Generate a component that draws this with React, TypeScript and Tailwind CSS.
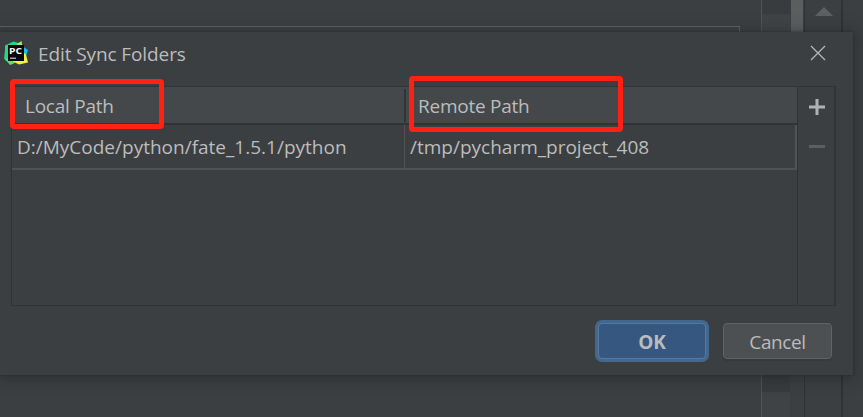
import React from 'react';

function PyCharmLogo() {
  return (
    <svg viewBox="0 0 24 24" className="h-6 w-6 shrink-0">
      <path d="M1 4.5 9.5 .5l7 2L7 23l-6-4Z" fill="#20d68b" />
      <path d="M0 18 1.5 5 6 4v16l-3-1Z" fill="#28d583" />
      <path d="m13 3 4.5-3 1 6h-5Z" fill="#a7ed55" />
      <path d="m19 5.5 5 3.5-2 6-4-2Z" fill="#16bfe4" />
      <path d="m5 18 2 5.5 4-2 4 2 9-2-2-8-4-3Z" fill="#f0ef45" />
      <path d="m1 18 5 6 4-2-2-5Z" fill="#5cdf70" />
      <rect x="4" y="4" width="16" height="16" fill="#080808" />
      <path d="M6 17.2h6" stroke="#ddd" strokeWidth="1.1" />
      <text x="5" y="12.8" fill="#fff" fontFamily="Open Sans, sans-serif" fontWeight="700" fontSize="9.6" textLength="13" lengthAdjust="spacingAndGlyphs">PC</text>
    </svg>
  );
}

function EditorBackdrop() {
  return (
    <div className="flex h-full w-full">
      <div className="w-[762px] border-r border-[#515455] pt-[26px]">
        <div className="h-[200px] w-[740px] border-t border-r border-[#606264]" />
      </div>
      <div className="flex w-[29px] flex-col">
        <div className="h-[14px] bg-[#393c3e]" />
        <div className="h-[300px] w-[28px] bg-[#404345]" />
        <div className="h-[78px] w-[28px] bg-[#383b3d]" />
        <div className="w-[28px] grow bg-[#404345]" />
      </div>
      <div className="w-[13px]">
        <div className="h-[200px] w-[12px] bg-[#5b5e5f]" />
      </div>
      <div className="flex w-[39px] justify-center border-r-2 border-l border-[#303233] pt-[7px] pl-[2px]">
        <svg viewBox="0 0 18 9" className="h-[9px] w-[18px]">
          <path d="M9 0 18 9H0Z" fill="#5e6060" />
        </svg>
      </div>
    </div>
  );
}

export default function App() {
  return (
    <div className="relative h-[417px] w-[863px] overflow-hidden bg-[#3c3f41] font-['Open_Sans','Noto_Sans',sans-serif] text-[19px] leading-6 text-[#bbbcbd]">
      <EditorBackdrop />
      <section className="absolute top-8 left-0 flex h-[343px] w-[853px] flex-col bg-[#3c3f41] shadow-[0_2px_12px_3px_rgba(35,35,35,0.5),0_0_2px_rgba(35,35,35,0.6)]">
        <header className="flex h-[54px] items-start pt-[9px] pl-1">
          <PyCharmLogo />
          <h1 className="ml-[10px] pt-px tracking-[-0.1px] whitespace-nowrap">Edit Sync Folders</h1>
          <svg viewBox="0 0 16 16" className="mt-1 mr-[27px] ml-auto h-4 w-4">
            <path d="m1 1 14 14M15 1 1 15" stroke="#b5b6b7" strokeWidth="1.3" />
          </svg>
        </header>

        <div className="ml-[11px] flex h-[220px] w-[825px] border border-r-2 border-[#323334]">
          <div className="w-[785px]">
            <div className="flex h-[38px] items-center border-b-2 border-[#323334] bg-[#45484a]">
              <div className="flex h-[33px] w-[394px] items-center border-r-2 border-[#323334] pt-px pl-[13px]">
                <span className="tracking-[-0.25px] whitespace-nowrap">Local Path</span>
              </div>
              <span className="pt-px pl-3 tracking-[-0.25px] whitespace-nowrap">Remote Path</span>
            </div>
            <div className="flex h-[45px] border-r-2 border-b-2 border-[#505254]">
              <div className="flex w-[393px] items-center border-r border-[#505254] pl-[5px]">
                <span className="whitespace-nowrap">D:/MyCode/python/fate_1.5.1/python</span>
              </div>
              <div className="flex items-center pl-[5px]">
                <span className="whitespace-nowrap">/tmp/pycharm_project_408</span>
              </div>
            </div>
          </div>
          <div className="flex grow flex-col items-center border-l border-[#323334] pt-3 pl-px">
            <svg viewBox="0 0 16 16" className="h-4 w-4">
              <path d="M8 0v16M0 8h16" stroke="#b0b1b2" strokeWidth="3" />
            </svg>
            <div className="mt-[30px] h-[3px] w-4 bg-[#5c5e5f]" />
          </div>
        </div>

        <footer className="flex items-start justify-end pt-[14px] pr-[21px]">
          <button className="flex h-[42px] w-[114px] rounded-[7px] bg-[#43688f] p-[3px]">
            <span className="flex h-full w-full items-center justify-center rounded-[4px] border-[1.5px] border-[#56789e] bg-[#365880] pt-px font-bold">OK</span>
          </button>
          <button className="mt-[3px] ml-[14px] flex h-9 w-[109px] items-center justify-center rounded-[4px] border border-[#606263] bg-[#4c5052] pt-[2px] tracking-[-0.4px] shadow-[0_2px_1px_#37393a]">
            Cancel
          </button>
        </footer>
      </section>

      <div className="absolute top-[79px] left-[10px] h-[50px] w-[154px] rounded-[4px] border-[5px] border-[#ff2114]" />
      <div className="absolute top-[76px] left-[409px] h-[56px] w-[214px] rounded-[4px] border-[5px] border-[#ff2114]" />
    </div>
  );
}
